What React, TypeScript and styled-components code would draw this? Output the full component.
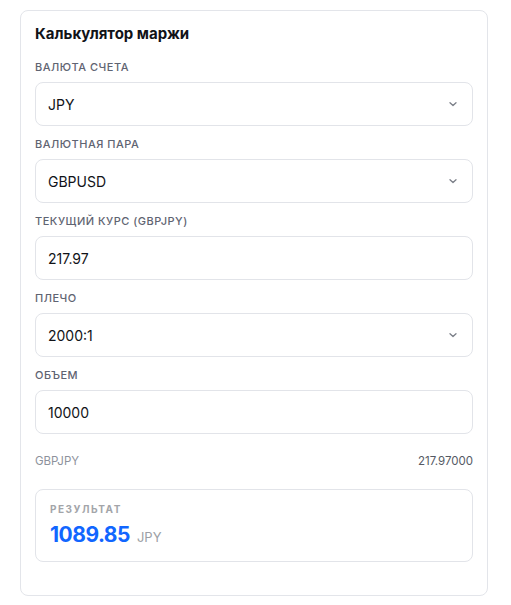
import React from "react";
import styled, { createGlobalStyle } from "styled-components";

const GlobalStyle = createGlobalStyle`
  body {
    margin: 0;
    background: #ffffff;
    font-family: Inter, "Noto Sans", sans-serif;
    color: #111318;
  }
`;

const Page = styled.div`
  padding: 10px 23px 9px 20px;
`;

const Card = styled.div`
  border: 1px solid #e3e5ea;
  border-radius: 8px;
  padding: 13px 14px 33px 14px;
  display: flex;
  flex-direction: column;
`;

const Title = styled.h2`
  margin: 0 0 16px;
  font-size: 15px;
  line-height: 20px;
  font-weight: 700;
  color: #111318;
`;

const Fields = styled.div`
  display: flex;
  flex-direction: column;
  gap: 11px;
`;

const Field = styled.div`
  display: flex;
  flex-direction: column;
  gap: 8px;
`;

const Label = styled.label`
  font-size: 11px;
  line-height: 14px;
  font-weight: 500;
  letter-spacing: 0.5px;
  text-transform: uppercase;
  color: #5f6472;
`;

const Box = styled.div`
  height: 44px;
  box-sizing: border-box;
  border: 1px solid #e2e4e9;
  border-radius: 8px;
  padding: 0 14px 0 12px;
  display: flex;
  align-items: center;
  justify-content: space-between;
  font-size: 14px;
  color: #111318;
  background: #fff;
`;

const InfoRow = styled.div`
  margin-top: 19px;
  display: flex;
  justify-content: space-between;
  font-size: 11.5px;
  line-height: 16px;
`;

const InfoPair = styled.span`
  color: #8d929c;
`;

const InfoRate = styled.span`
  color: #555a64;
`;

const Result = styled.div`
  margin-top: 20px;
  border: 1px solid #e2e4e9;
  border-radius: 8px;
  padding: 13px 14px 12px 14px;
  display: flex;
  flex-direction: column;
  gap: 6px;
`;

const ResultLabel = styled.div`
  font-size: 10px;
  line-height: 12px;
  font-weight: 700;
  letter-spacing: 1.5px;
  color: #a3a5a9;
`;

const ResultValue = styled.div`
  display: flex;
  align-items: baseline;
  gap: 7px;
`;

const Amount = styled.span`
  font-size: 21px;
  line-height: 28px;
  font-weight: 700;
  color: #1166ff;
  letter-spacing: -0.5px;
`;

const Currency = styled.span`
  font-size: 13px;
  color: #9c9fa5;
`;

const Chevron = () => (
  <svg width="10" height="10" viewBox="0 0 10 10" fill="none">
    <path
      d="M2 3.8 L5 6.6 L8 3.8"
      stroke="#7a7e87"
      strokeWidth="1.3"
      strokeLinecap="round"
      strokeLinejoin="round"
    />
  </svg>
);

type FieldDef = {
  label: string;
  value: string;
  select?: boolean;
};

const fields: FieldDef[] = [
  { label: "Валюта счета", value: "JPY", select: true },
  { label: "Валютная пара", value: "GBPUSD", select: true },
  { label: "Текущий курс (GBPJPY)", value: "217.97" },
  { label: "Плечо", value: "2000:1", select: true },
  { label: "Объем", value: "10000" },
];

const App = () => {
  return (
    <Page>
      <GlobalStyle />
      <Card>
        <Title>Калькулятор маржи</Title>
        <Fields>
          {fields.map((f) => (
            <Field key={f.label}>
              <Label>{f.label}</Label>
              <Box>
                <span>{f.value}</span>
                {f.select && <Chevron />}
              </Box>
            </Field>
          ))}
        </Fields>
        <InfoRow>
          <InfoPair>GBPJPY</InfoPair>
          <InfoRate>217.97000</InfoRate>
        </InfoRow>
        <Result>
          <ResultLabel>РЕЗУЛЬТАТ</ResultLabel>
          <ResultValue>
            <Amount>1089.85</Amount>
            <Currency>JPY</Currency>
          </ResultValue>
        </Result>
      </Card>
    </Page>
  );
};

export default App;
